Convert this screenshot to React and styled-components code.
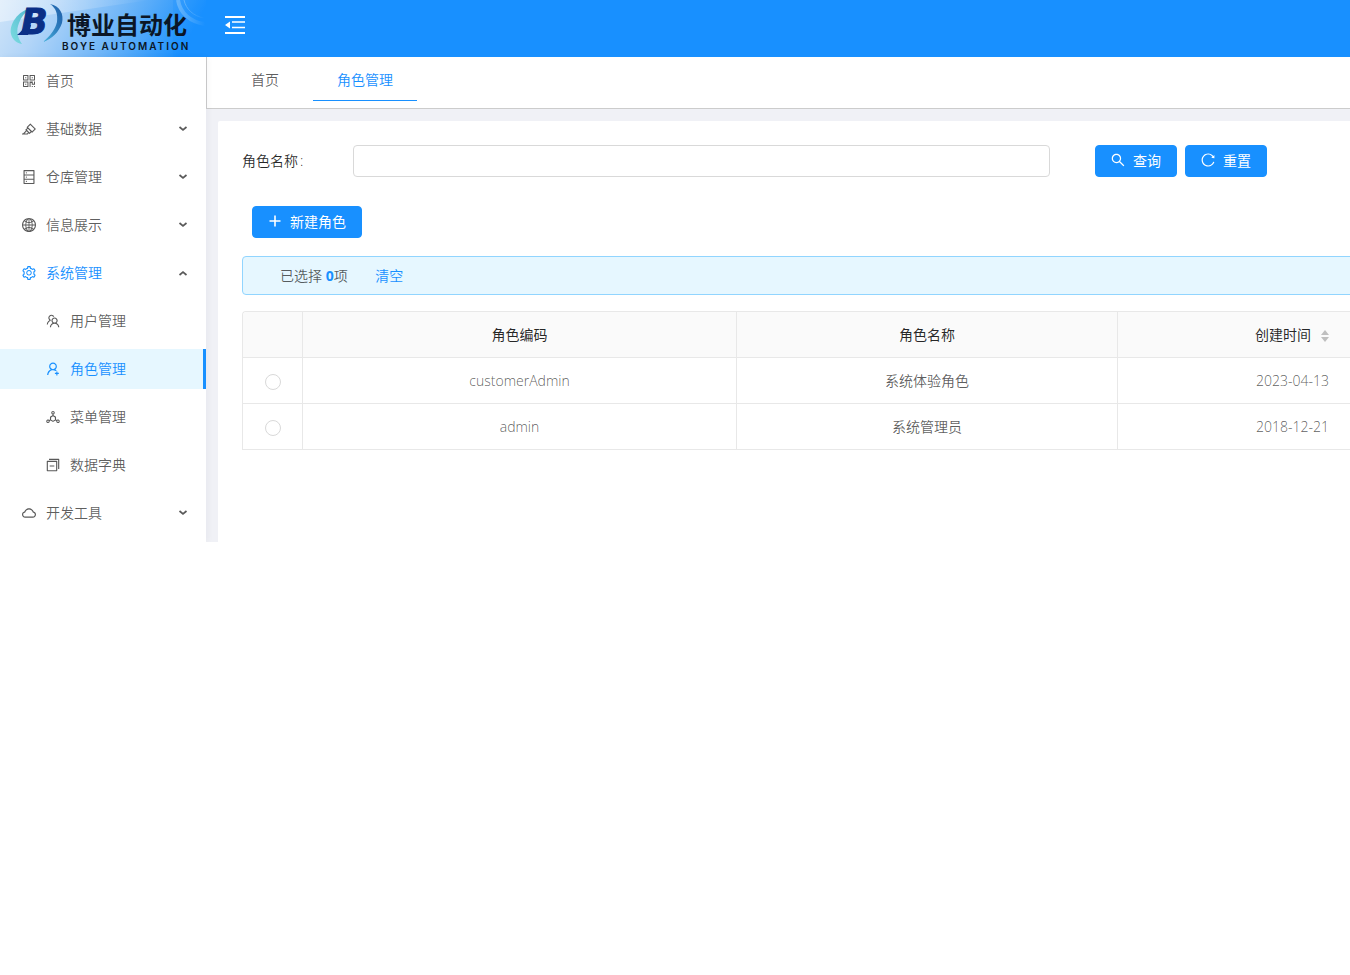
import React, { useState } from 'react'
import styled, { createGlobalStyle, css } from 'styled-components'
import {
  AiOutlineQrcode,
  AiOutlineHighlight,
  AiOutlineDatabase,
  AiOutlineGlobal,
  AiOutlineSetting,
  AiOutlineTeam,
  AiOutlineUserAdd,
  AiOutlineDeploymentUnit,
  AiOutlineSwitcher,
  AiOutlineCloud,
  AiOutlineSearch,
  AiOutlineReload
} from 'react-icons/ai'

const GlobalStyle = createGlobalStyle`
  * {
    box-sizing: border-box;
  }
  body {
    margin: 0;
    overflow-x: hidden;
    background: #fff;
    color: rgba(0, 0, 0, 0.65);
    font-family: 'Open Sans', 'Noto Sans CJK SC', sans-serif;
    font-size: 14px;
    font-weight: 350;
    line-height: 22px;
  }
  button, input {
    font: inherit;
  }
`

const Page = styled.div`
  overflow: hidden;
`

// the console is laid out for wide screens, narrower windows cut the right side
const Shell = styled.div`
  min-width: 1920px;
`

const Header = styled.header`
  display: flex;
  height: 57px;
  background: #1890ff;
`

const Brand = styled.a`
  position: relative;
  flex: none;
  width: 206px;
  overflow: hidden;
  color: #0b1626;
  text-decoration: none;
`

const BrandArt = styled.svg`
  display: block;
`

const BrandText = styled.span`
  position: absolute;
  left: 62px;
  top: 12px;
  display: flex;
  flex-direction: column;
  font-family: 'Liberation Sans', 'Noto Sans CJK SC', sans-serif;
`

const BrandName = styled.span`
  padding-left: 5px;
  font-size: 24px;
  font-weight: 700;
  line-height: 28px;
`

const BrandSub = styled.span`
  font-family: Inter, sans-serif;
  font-size: 10px;
  font-weight: 600;
  line-height: 12px;
  letter-spacing: 2px;
  white-space: nowrap;
`

const FoldButton = styled.button`
  display: flex;
  align-items: center;
  height: 50px;
  margin-left: 19px;
  padding: 0;
  border: 0;
  background: none;
  color: #fff;
  cursor: pointer;
`

const Body = styled.div`
  display: flex;
`

const Sider = styled.nav`
  position: relative;
  flex: none;
  width: 206px;
  padding: 4px 0 9px;
  background: #fff;
  box-shadow: 2px 0 6px rgba(0, 21, 41, 0.04);
`

const Menu = styled.ul`
  display: flex;
  flex-direction: column;
  gap: 8px;
  margin: 0;
  padding: 0;
  list-style: none;
  & & {
    margin-top: 8px;
  }
`

const MenuLink = styled.a`
  display: flex;
  align-items: center;
  gap: 9px;
  height: 40px;
  padding: 0 15px 0 ${props => (props.$sub ? 45 : 21)}px;
  border-right: 3px solid transparent;
  color: rgba(0, 0, 0, 0.65);
  text-decoration: none;
  ${props => props.$open && css`
    color: #1890ff;
  `}
  ${props => props.$active && css`
    background: #e6f7ff;
    border-right-color: #1890ff;
    color: #1890ff;
  `}
  &:hover {
    color: #1890ff;
  }
  > svg:first-child {
    flex: none;
    font-size: 16px;
  }
`

const Arrow = styled.svg`
  margin-left: auto;
  color: rgba(0, 0, 0, 0.65);
  transform: ${props => (props.$up ? 'rotate(180deg)' : 'none')};
`

const Main = styled.main`
  flex: 1;
  display: flex;
  flex-direction: column;
  min-width: 0;
  background: #f0f1f6;
`

const TabBar = styled.div`
  display: flex;
  gap: 10px;
  height: 52px;
  padding-left: 20px;
  border-left: 1px solid #ccc;
  border-bottom: 1px solid #ccc;
  background: #fff;
`

const Tab = styled.a`
  height: 44px;
  padding: 12px 24px 0;
  border-bottom: 1px solid ${props => (props.$active ? '#1890ff' : 'transparent')};
  color: ${props => (props.$active ? '#1890ff' : 'rgba(0, 0, 0, 0.65)')};
  text-decoration: none;
`

const Card = styled.section`
  flex: 1;
  margin: 12px 12px 0;
  padding: 24px;
  border-radius: 2px 2px 0 0;
  background: #fff;
`

const SearchForm = styled.form`
  display: flex;
  margin-bottom: 29px;
`

const Field = styled.div`
  display: flex;
  align-items: center;
  width: 50%;
  padding-right: 13px;
`

const Label = styled.label`
  flex: none;
  width: 111px;
  color: rgba(0, 0, 0, 0.85);
  &::after {
    content: ':';
    margin-left: 2px;
  }
`

const TextInput = styled.input`
  flex: 1;
  height: 32px;
  padding: 4px 11px;
  border: 1px solid #d9d9d9;
  border-radius: 4px;
  outline: none;
  &:focus {
    border-color: #40a9ff;
  }
`

const Actions = styled.div`
  display: flex;
  gap: 8px;
  padding-left: 32px;
`

const Button = styled.button`
  display: inline-flex;
  align-items: center;
  gap: 7px;
  height: 32px;
  padding: 0 15px 0 14px;
  border: 1px solid #1890ff;
  border-radius: 4px;
  background: #1890ff;
  color: #fff;
  font-weight: 400;
  cursor: pointer;
  svg {
    width: 16px;
    height: 16px;
    margin-bottom: 2px;
  }
`

const Toolbar = styled.div`
  display: flex;
  padding-left: 10px;
  margin-bottom: 18px;
`

const Notice = styled.div`
  margin-bottom: 16px;
  padding: 8px 15px 7px 37px;
  border: 1px solid #91d5ff;
  border-radius: 4px;
  background: #e6f7ff;
`

const Count = styled.b`
  font-weight: 700;
  color: #1890ff;
`

const ClearLink = styled.a`
  margin-left: 24px;
  color: #1890ff;
  text-decoration: none;
`

const Table = styled.table`
  width: 100%;
  table-layout: fixed;
  border-collapse: separate;
  border-spacing: 0;
  border: 1px solid #e8e8e8;
  border-width: 1px 0 0 1px;
  border-radius: 4px 4px 0 0;
`

const Cell = styled.td`
  height: 46px;
  padding: 0 16px;
  border: 1px solid #e8e8e8;
  border-width: 0 1px 1px 0;
  text-align: center;
`

const HeadCell = styled(Cell)`
  background: #fafafa;
  color: rgba(0, 0, 0, 0.85);
  font-weight: 400;
  &:first-child {
    border-top-left-radius: 4px;
  }
`

const Radio = styled.input`
  appearance: none;
  display: block;
  width: 16px;
  height: 16px;
  margin: 2px auto 0;
  border: 1px solid #d9d9d9;
  border-radius: 50%;
  background: #fff;
  &:checked {
    border: 5px solid #1890ff;
  }
`

const SortIcon = styled.svg`
  margin-left: 9px;
  vertical-align: -3px;
`

const menus = [
  { title: '首页', icon: AiOutlineQrcode },
  { title: '基础数据', icon: AiOutlineHighlight, arrow: true },
  { title: '仓库管理', icon: AiOutlineDatabase, arrow: true },
  { title: '信息展示', icon: AiOutlineGlobal, arrow: true },
  {
    title: '系统管理',
    icon: AiOutlineSetting,
    arrow: true,
    children: [
      { title: '用户管理', icon: AiOutlineTeam },
      { title: '角色管理', icon: AiOutlineUserAdd, active: true },
      { title: '菜单管理', icon: AiOutlineDeploymentUnit },
      { title: '数据字典', icon: AiOutlineSwitcher }
    ]
  },
  { title: '开发工具', icon: AiOutlineCloud, arrow: true }
]

const roles = [
  { code: 'customerAdmin', name: '系统体验角色', created: '2023-04-13' },
  { code: 'admin', name: '系统管理员', created: '2018-12-21' }
]

const PlusIcon = () => (
  <svg viewBox="0 0 16 16" fill="none" stroke="currentColor" strokeWidth="1.600">
    <path d="M8 2.500v11M2.500 8h11" />
  </svg>
)

const FoldIcon = () => (
  <svg width="20" height="18" viewBox="0 0 20 18" fill="currentColor">
    <path d="M0 0h20v2H0zM7 5.200h13v1.600H7zM7 10.700h13v1.600H7zM0 16h20v2H0zM0 9l5-3.500v7z" />
  </svg>
)

const MenuItem = ({ item, sub }) => {
  const Icon = item.icon
  return (
    <li>
      <MenuLink href="#" $sub={sub} $open={!!item.children} $active={item.active}>
        <Icon />
        {item.title}
        {item.arrow && (
          <Arrow width="10" height="8" viewBox="0 0 10 8" $up={!!item.children}>
            <path d="M1.500 2 5 5l3.500-3" fill="none" stroke="currentColor" strokeWidth="1.700" />
          </Arrow>
        )}
      </MenuLink>
      {item.children && (
        <Menu>
          {item.children.map(child => <MenuItem key={child.title} item={child} sub />)}
        </Menu>
      )}
    </li>
  )
}

const Logo = () => (
  <Brand href="#">
    <BrandArt width="206" height="57" viewBox="0 0 206 57">
      <defs>
        <linearGradient id="sky" x1="0" y1="0" x2="1" y2="0.15">
          <stop offset="0" stopColor="#cfe4f8" />
          <stop offset="0.25" stopColor="#b2d5f8" />
          <stop offset="0.6" stopColor="#72b7f8" />
          <stop offset="0.85" stopColor="#3b9ffb" />
          <stop offset="1" stopColor="#1890ff" />
        </linearGradient>
        <linearGradient id="beam" x1="0" y1="0" x2="1" y2="0">
          <stop offset="0" stopColor="#fff" stopOpacity="0.45" />
          <stop offset="1" stopColor="#fff" stopOpacity="0" />
        </linearGradient>
        <linearGradient id="teal" x1="0" y1="1" x2="1" y2="0">
          <stop offset="0" stopColor="#7ddde0" />
          <stop offset="1" stopColor="#4fb4cf" />
        </linearGradient>
        <linearGradient id="swoosh" x1="0" y1="1" x2="1" y2="0">
          <stop offset="0" stopColor="#49b3dc" />
          <stop offset="0.6" stopColor="#2a78bb" />
          <stop offset="1" stopColor="#1f5ca6" />
        </linearGradient>
        <linearGradient id="ring" x1="0" y1="0" x2="1" y2="0">
          <stop offset="0" stopColor="#63b3fb" />
          <stop offset="1" stopColor="#1890ff" />
        </linearGradient>
      </defs>
      <rect width="206" height="57" fill="url(#sky)" />
      <path d="M0 22 150 0H0z" fill="url(#beam)" />
      <path d="M173 0h33v57h-33z" fill="#1890ff" opacity="0.25" />
      <path d="M178 0c2 13 12 22 27 24" fill="none" stroke="url(#ring)" strokeWidth="4" />
      <path d="M184 0c2 9 9 16 20 18" fill="none" stroke="url(#ring)" strokeWidth="1" />
      <path d="M31 8C18 11 9 24 11 34c1 5 5 9 11 10-5-7-6-14-3-21 2-6 6-11 12-15z" fill="url(#teal)" />
      <path d="M50 4c10 2 14 10 12 19-3 9-10 16-19 19 7-6 12-12 14-20 1-8-1-14-7-18z" fill="url(#swoosh)" />
      <text x="21" y="34" fontFamily="DejaVu Sans" fontWeight="700" fontStyle="italic" fontSize="35" fill="#0b2f86" stroke="#0b2f86" strokeWidth="1">B</text>
      <path d="M17 35c4-3 6-6 8-10h6l-3 10zM27 9h14l-1 3H31z" fill="#0b2f86" />
    </BrandArt>
    <BrandText>
      <BrandName>博业自动化</BrandName>
      <BrandSub>BOYE AUTOMATION</BrandSub>
    </BrandText>
  </Brand>
)

export default function App() {
  const [name, setName] = useState('')
  const [selected, setSelected] = useState(null)

  return (
    <Page>
      <GlobalStyle />
      <Shell>
        <Header>
          <Logo />
          <FoldButton type="button" aria-label="收起菜单"><FoldIcon /></FoldButton>
        </Header>
        <Body>
          <Sider>
            <Menu>
              {menus.map(item => <MenuItem key={item.title} item={item} />)}
            </Menu>
          </Sider>
          <Main>
            <TabBar>
              <Tab href="#">首页</Tab>
              <Tab href="#" $active>角色管理</Tab>
            </TabBar>
            <Card>
              <SearchForm onSubmit={e => e.preventDefault()}>
                <Field>
                  <Label htmlFor="roleName">角色名称</Label>
                  <TextInput id="roleName" value={name} onChange={e => setName(e.target.value)} />
                </Field>
                <Actions>
                  <Button type="submit"><AiOutlineSearch />查询</Button>
                  <Button type="button" onClick={() => setName('')}><AiOutlineReload />重置</Button>
                </Actions>
              </SearchForm>
              <Toolbar>
                <Button type="button"><PlusIcon />新建角色</Button>
              </Toolbar>
              <Notice>
                已选择 <Count>{selected ? 1 : 0}</Count>项{' '}
                <ClearLink href="#" onClick={() => setSelected(null)}>清空</ClearLink>
              </Notice>
              <Table>
                <colgroup>
                  <col width="60" />
                  <col width="434" />
                  <col width="381" />
                  <col width="350" />
                  <col />
                </colgroup>
                <thead>
                  <tr>
                    <HeadCell as="th" />
                    <HeadCell as="th">角色编码</HeadCell>
                    <HeadCell as="th">角色名称</HeadCell>
                    <HeadCell as="th">
                      创建时间
                      <SortIcon width="10" height="14" viewBox="0 0 10 14" fill="#bfbfbf">
                        <path d="M5 1l4 5H1zM5 13l4-5H1z" />
                      </SortIcon>
                    </HeadCell>
                    <HeadCell as="th" />
                  </tr>
                </thead>
                <tbody>
                  {roles.map(role => (
                    <tr key={role.code}>
                      <Cell>
                        <Radio
                          type="radio"
                          name="role"
                          aria-label={role.name}
                          checked={selected === role.code}
                          onChange={() => setSelected(role.code)}
                        />
                      </Cell>
                      <Cell>{role.code}</Cell>
                      <Cell>{role.name}</Cell>
                      <Cell>{role.created}</Cell>
                      <Cell />
                    </tr>
                  ))}
                </tbody>
              </Table>
            </Card>
          </Main>
        </Body>
      </Shell>
    </Page>
  )
}
